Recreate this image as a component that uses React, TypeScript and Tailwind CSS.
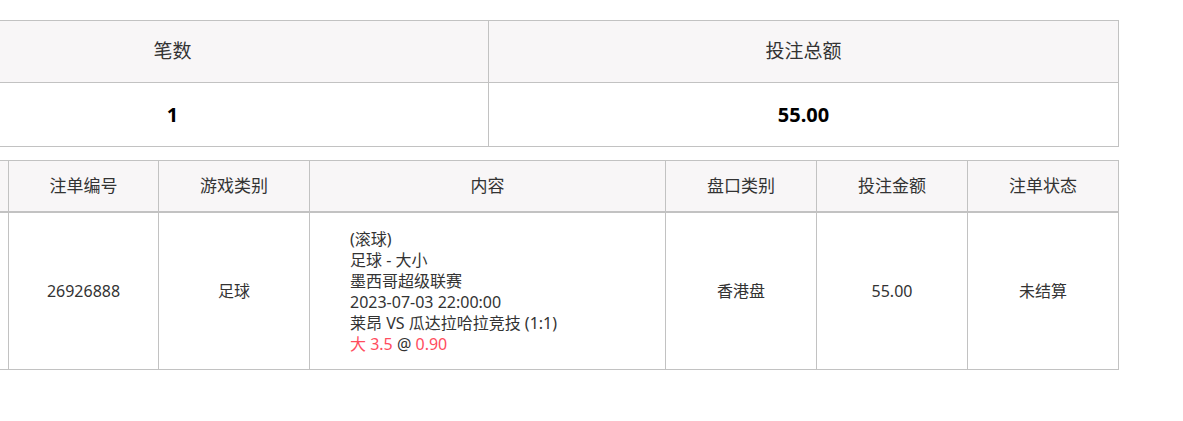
const border = "border-[#c2c2c2]";

const summary = [
	{ label: "笔数", value: "1", w: "w-[632px]" },
	{ label: "投注总额", value: "55.00", w: "w-[629px]" },
];

const columns = [
	{ label: "", w: "w-[152px]" },
	{ label: "注单编号", w: "w-[150px]" },
	{ label: "游戏类别", w: "w-[151px]" },
	{ label: "内容", w: "w-[356px]" },
	{ label: "盘口类别", w: "w-[151px]" },
	{ label: "投注金额", w: "w-[151px]" },
	{ label: "注单状态", w: "w-[150px]" },
];

export default function App() {
	return (
		<div
			className="min-h-[421px] overflow-hidden bg-white text-[#333]"
			style={{ fontFamily: '"Noto Sans", "Noto Sans CJK SC", sans-serif' }}
		>
			<div className="ml-[-144px] w-[1263px] pt-[20px]">
				{/* Summary */}
				<div className={`border ${border}`}>
					<div className={`flex h-[62px] border-b ${border} bg-[#f8f6f7]`}>
						{summary.map((c, i) => (
							<div
								key={c.label}
								className={`${c.w} flex shrink-0 items-center justify-center text-[19px] ${
									i < summary.length - 1 ? `border-r ${border}` : ""
								}`}
							>
								{c.label}
							</div>
						))}
					</div>
					<div className="flex h-[63px]">
						{summary.map((c, i) => (
							<div
								key={c.label}
								className={`${c.w} flex shrink-0 items-center justify-center text-[20px] font-bold text-black ${
									i < summary.length - 1 ? `border-r ${border}` : ""
								}`}
							>
								{c.value}
							</div>
						))}
					</div>
				</div>

				{/* Bets */}
				<div className={`mt-[13px] border ${border}`}>
					<div className={`flex h-[52px] border-b-2 ${border} bg-[#f8f6f7]`}>
						{columns.map((c, i) => (
							<div
								key={i}
								className={`${c.w} flex shrink-0 items-center justify-center text-[17px] ${
									i < columns.length - 1 ? `border-r ${border}` : ""
								}`}
							>
								{c.label}
							</div>
						))}
					</div>
					<div className="flex h-[156px] text-[16px] leading-[21px]">
						<div className={`${columns[0].w} shrink-0 border-r ${border}`} />
						<div className={`${columns[1].w} flex shrink-0 items-center justify-center border-r ${border}`}>
							26926888
						</div>
						<div className={`${columns[2].w} flex shrink-0 items-center justify-center border-r ${border}`}>
							足球
						</div>
						<div className={`${columns[3].w} flex shrink-0 flex-col justify-center border-r ${border} pl-[40px] pt-[2px]`}>
							<div>(滚球)</div>
							<div>足球 - 大小</div>
							<div>墨西哥超级联赛</div>
							<div>2023-07-03 22:00:00</div>
							<div>莱昂 VS 瓜达拉哈拉竞技 (1:1)</div>
							<div>
								<span className="text-[#ff4d5e]">大 3.5</span> @{" "}
								<span className="text-[#ff4d5e]">0.90</span>
							</div>
						</div>
						<div className={`${columns[4].w} flex shrink-0 items-center justify-center border-r ${border}`}>
							香港盘
						</div>
						<div className={`${columns[5].w} flex shrink-0 items-center justify-center border-r ${border}`}>
							55.00
						</div>
						<div className={`${columns[6].w} flex shrink-0 items-center justify-center`}>
							未结算
						</div>
					</div>
				</div>
			</div>
		</div>
	);
}
